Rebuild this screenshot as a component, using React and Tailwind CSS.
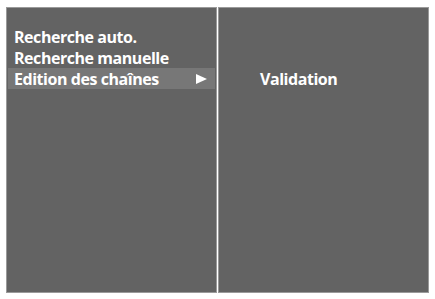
import React from "react";

const items = ["Recherche auto.", "Recherche manuelle", "Edition des chaînes"];

export default function App() {
  return (
    <div
      className="w-[435px] h-[299px] bg-white pl-[6px] pt-[7px] flex gap-[1px]"
      style={{ fontFamily: "'Open Sans', 'Noto Sans', sans-serif" }}
    >
      {/* Left menu panel */}
      <div className="w-[211px] h-[286px] bg-[#636363] border border-[#9a9a9a] px-[1px] pt-[18px]">
        {items.map((label, i) => (
          <div
            key={label}
            className={`h-[21px] flex items-center justify-between pl-[6px] pr-[8px] text-white text-[16px] tracking-[-0.45px] font-bold leading-none ${
              i === 2 ? "bg-[#777777]" : ""
            }`}
          >
            <span>{label}</span>
            {i === 2 && (
              <svg width="11" height="10" viewBox="0 0 11 10" className="mt-[1px]">
                <path d="M0 0 L11 5 L0 10 Z" fill="white" />
              </svg>
            )}
          </div>
        ))}
      </div>

      {/* Right panel */}
      <div className="w-[211px] h-[286px] bg-[#636363] border border-[#9a9a9a] pt-[60px] pl-[41px]">
        <div className="h-[21px] flex items-center text-white text-[16px] tracking-[-0.45px] font-bold leading-none">
          Validation
        </div>
      </div>
    </div>
  );
}
